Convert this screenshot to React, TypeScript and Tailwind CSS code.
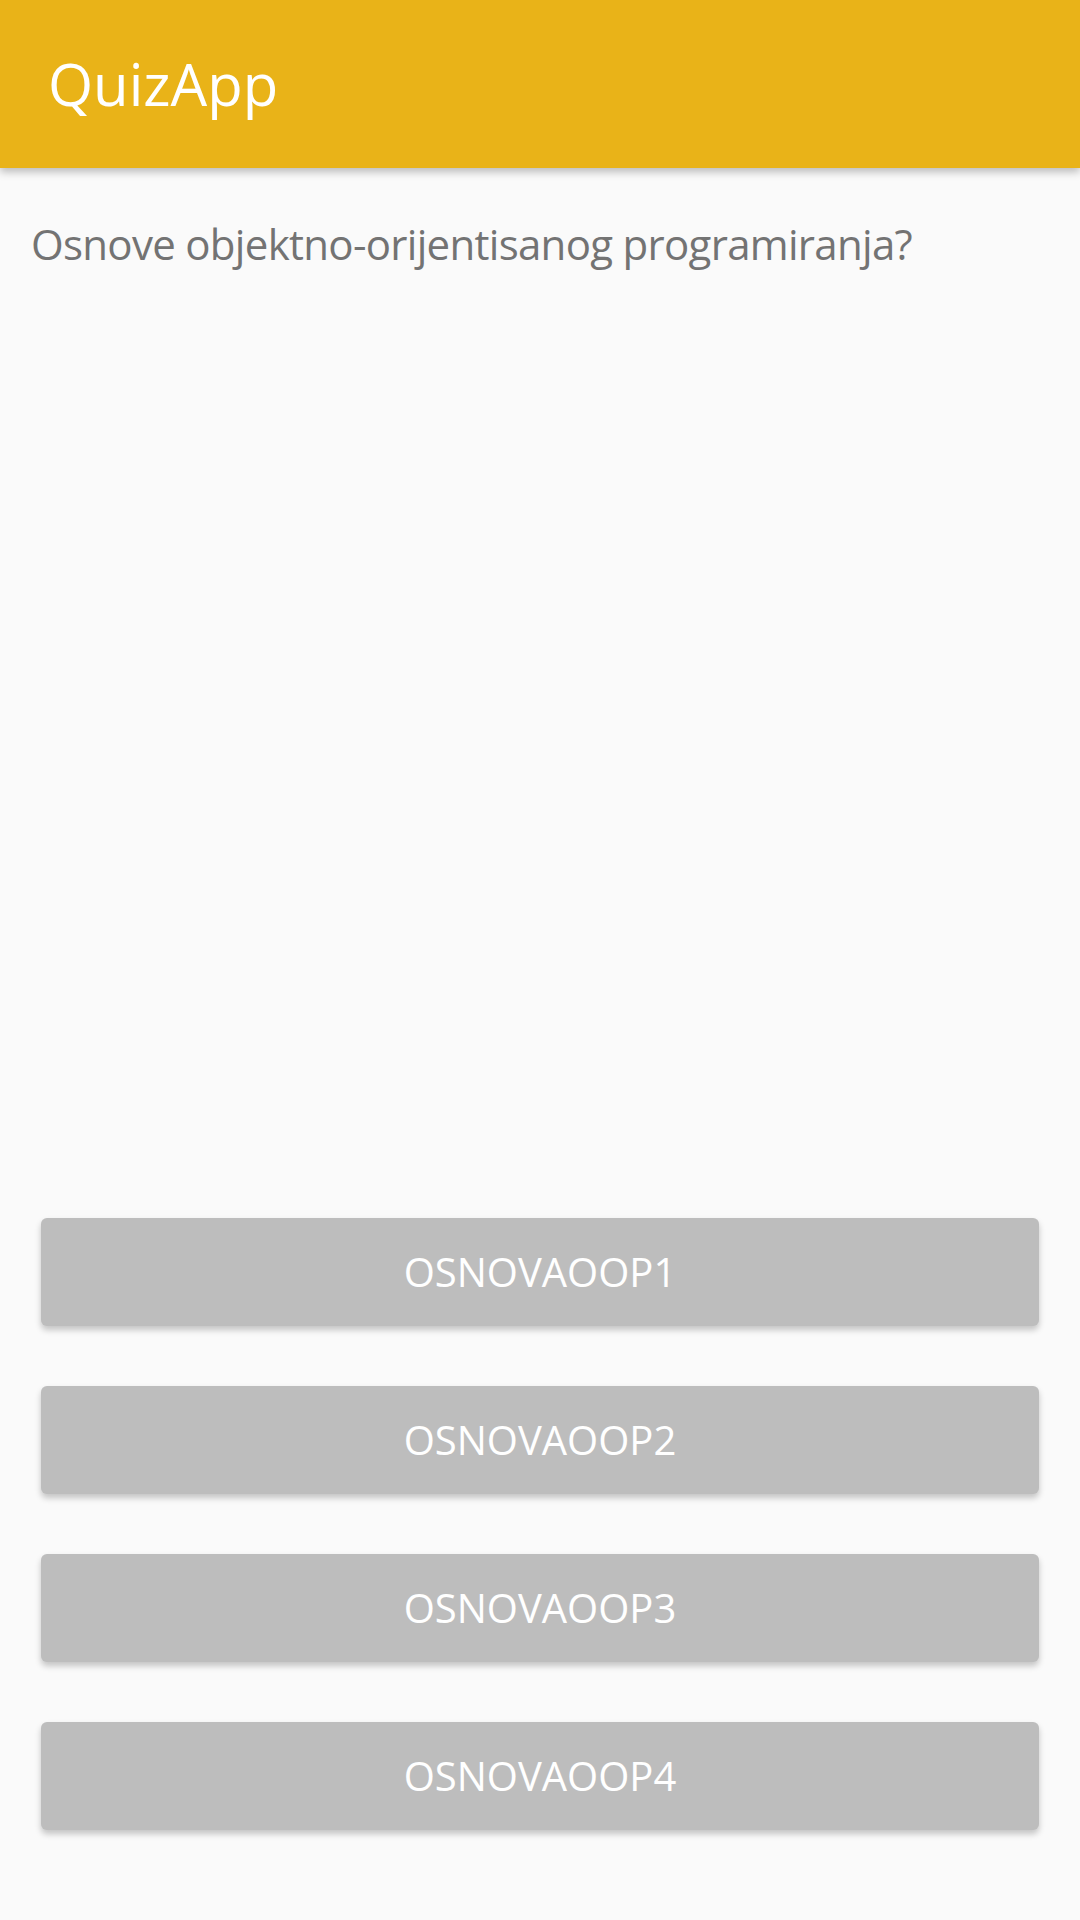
const answers = ['OSNOVAOOP1', 'OSNOVAOOP2', 'OSNOVAOOP3', 'OSNOVAOOP4'];

export default function App() {
  return (
    <div className="flex min-h-[1920px] flex-col bg-[#fafafa] font-['Open_Sans',sans-serif]">
      <header className="relative z-10 flex h-[168px] items-center bg-[#e9b318] px-[48px] shadow-[0_4px_8px_rgba(0,0,0,0.25)]">
        <h1 className="text-[58px] leading-none text-white">QuizApp</h1>
      </header>

      <p className="px-[31px] pt-[50px] text-[42px] leading-tight tracking-[-0.7px] text-[#737373]">
        Osnove objektno-orijentisanog programiranja?
      </p>

      <div className="flex-1" />

      <div className="flex flex-col gap-[60px] px-[41px] pb-[90px]">
        {answers.map((a) => (
          <button
            key={a}
            className="flex h-[108px] items-center justify-center rounded-[6px] bg-[#bdbdbd] text-[40px] text-white shadow-[0_4px_6px_rgba(0,0,0,0.22)]"
          >
            {a}
          </button>
        ))}
      </div>
    </div>
  );
}
